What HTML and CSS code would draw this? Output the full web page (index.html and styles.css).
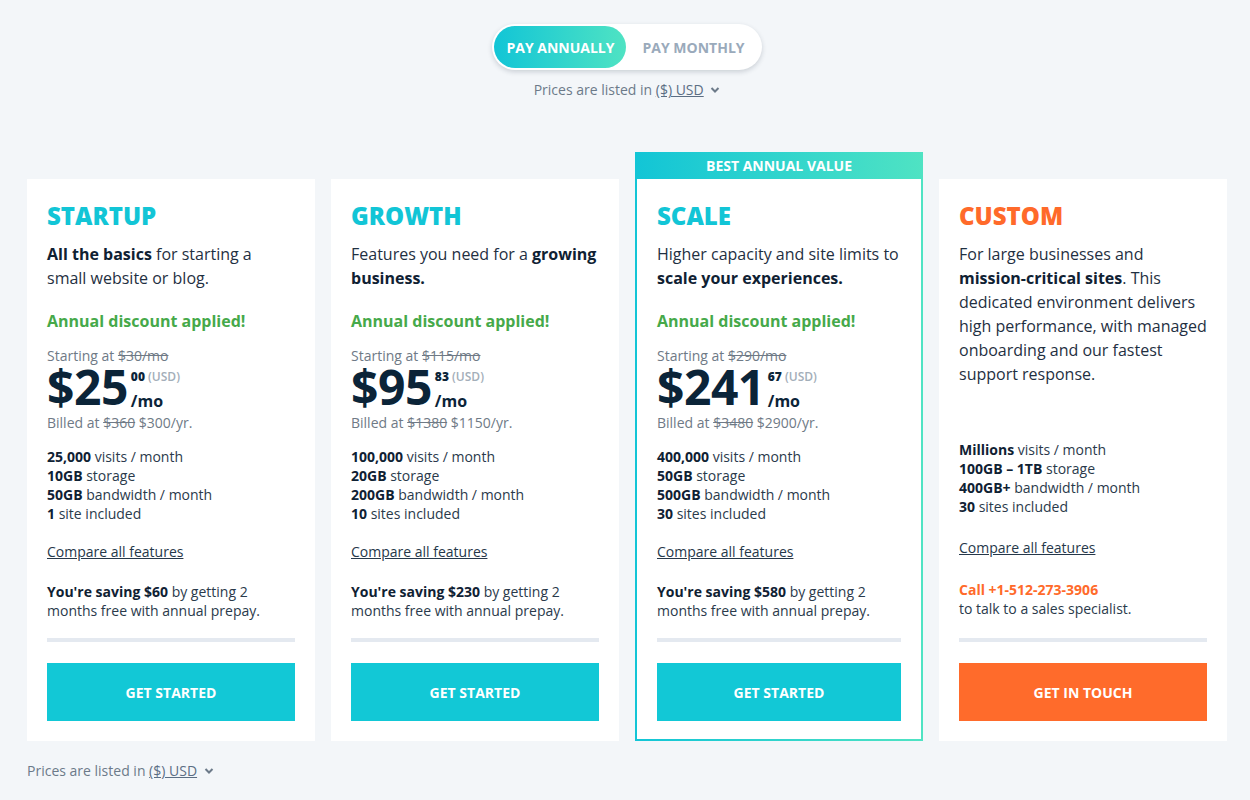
FILE: index.html
```html
<!DOCTYPE html>
<html lang="en">
<head>
  <meta charset="UTF-8" />
  <meta name="viewport" content="width=device-width, initial-scale=1.0"/>
  <title>Pricing Plans</title>
  <link rel="stylesheet" href="styles.css">
</head>
<body>
  <div class="page">
    <div class="billing">
      <div class="toggle">
        <button class="toggle-btn active">PAY ANNUALLY</button>
        <button class="toggle-btn">PAY MONTHLY</button>
      </div>
      <p class="currency">Prices are listed in <a href="#">($) USD</a>
        <svg class="chev" width="10" height="8" viewBox="0 0 10 8"><path d="M1.5 2l3.5 3.5L8.5 2" fill="none" stroke="#6c7a89" stroke-width="2"/></svg>
      </p>
    </div>

    <div class="plans">
      <div class="plan">
        <h2 class="plan-name">STARTUP</h2>
        <p class="plan-desc"><b>All the basics</b> for starting a small website or blog.</p>
        <p class="discount">Annual discount applied!</p>
        <p class="starting">Starting at <s>$30/mo</s></p>
        <div class="price">
          <span class="amount">$25</span>
          <span class="price-side">
            <span class="cents"><b>00</b> (USD)</span>
            <span class="per">/mo</span>
          </span>
        </div>
        <p class="billed">Billed at <s>$360</s> $300/yr.</p>
        <ul class="features">
          <li><b>25,000</b> visits / month</li>
          <li><b>10GB</b> storage</li>
          <li><b>50GB</b> bandwidth / month</li>
          <li><b>1</b> site included</li>
        </ul>
        <a class="compare" href="#">Compare all features</a>
        <p class="saving"><b>You're saving $60</b> by getting 2 months free with annual prepay.</p>
        <div class="divider"></div>
        <button class="cta">GET STARTED</button>
      </div>

      <div class="plan">
        <h2 class="plan-name">GROWTH</h2>
        <p class="plan-desc">Features you need for a <b>growing business.</b></p>
        <p class="discount">Annual discount applied!</p>
        <p class="starting">Starting at <s>$115/mo</s></p>
        <div class="price">
          <span class="amount">$95</span>
          <span class="price-side">
            <span class="cents"><b>83</b> (USD)</span>
            <span class="per">/mo</span>
          </span>
        </div>
        <p class="billed">Billed at <s>$1380</s> $1150/yr.</p>
        <ul class="features">
          <li><b>100,000</b> visits / month</li>
          <li><b>20GB</b> storage</li>
          <li><b>200GB</b> bandwidth / month</li>
          <li><b>10</b> sites included</li>
        </ul>
        <a class="compare" href="#">Compare all features</a>
        <p class="saving"><b>You're saving $230</b> by getting 2 months free with annual prepay.</p>
        <div class="divider"></div>
        <button class="cta">GET STARTED</button>
      </div>

      <div class="plan featured">
        <div class="badge">BEST ANNUAL VALUE</div>
        <h2 class="plan-name">SCALE</h2>
        <p class="plan-desc">Higher capacity and site limits to <b>scale your experiences.</b></p>
        <p class="discount">Annual discount applied!</p>
        <p class="starting">Starting at <s>$290/mo</s></p>
        <div class="price">
          <span class="amount">$241</span>
          <span class="price-side">
            <span class="cents"><b>67</b> (USD)</span>
            <span class="per">/mo</span>
          </span>
        </div>
        <p class="billed">Billed at <s>$3480</s> $2900/yr.</p>
        <ul class="features">
          <li><b>400,000</b> visits / month</li>
          <li><b>50GB</b> storage</li>
          <li><b>500GB</b> bandwidth / month</li>
          <li><b>30</b> sites included</li>
        </ul>
        <a class="compare" href="#">Compare all features</a>
        <p class="saving"><b>You're saving $580</b> by getting 2 months free with annual prepay.</p>
        <div class="divider"></div>
        <button class="cta">GET STARTED</button>
      </div>

      <div class="plan custom">
        <h2 class="plan-name">CUSTOM</h2>
        <p class="plan-desc">For large businesses and <b>mission-critical sites</b>. This dedicated environment delivers high performance, with managed onboarding and our fastest support response.</p>
        <ul class="features">
          <li><b>Millions</b> visits / month</li>
          <li><b>100GB – 1TB</b> storage</li>
          <li><b>400GB+</b> bandwidth / month</li>
          <li><b>30</b> sites included</li>
        </ul>
        <a class="compare" href="#">Compare all features</a>
        <p class="saving"><b class="call">Call +1-512-273-3906</b><br>to talk to a sales specialist.</p>
        <div class="divider"></div>
        <button class="cta orange">GET IN TOUCH</button>
      </div>
    </div>

    <p class="currency bottom">Prices are listed in <a href="#">($) USD</a>
      <svg class="chev" width="10" height="8" viewBox="0 0 10 8"><path d="M1.5 2l3.5 3.5L8.5 2" fill="none" stroke="#6c7a89" stroke-width="2"/></svg>
    </p>
  </div>
</body>
</html>
```

FILE: styles.css
```css
body {
  margin: 0;
  background: #f3f6f9;
  font-family: "Open Sans", Arial, sans-serif;
  color: #1b2b3c;
}

p, h2, ul {
  margin: 0;
}

.page {
  padding: 24px 23px 0 27px;
}

.billing {
  display: flex;
  flex-direction: column;
  align-items: center;
}

.toggle {
  display: flex;
  padding: 2px;
  height: 42px;
  background: #fff;
  border-radius: 24px;
  box-shadow: 0 2px 5px rgba(20, 40, 60, 0.18);
}

.toggle-btn {
  border: none;
  background: none;
  font-family: inherit;
  font-size: 14px;
  font-weight: 700;
  color: #9aaabb;
  padding: 0 15px 0 17px;
  border-radius: 21px;
  cursor: pointer;
}

.toggle-btn.active {
  color: #fff;
  padding: 0 11px 0 12px;
  background: linear-gradient(90deg, #12c5d6, #4fe3c3);
}

.currency {
  margin-top: 10px;
  font-size: 14px;
  line-height: 20px;
  color: #6c7a89;
}

.currency a {
  color: #5b6e84;
}

.chev {
  margin-left: 3px;
  vertical-align: 1px;
}

.currency.bottom {
  margin-top: 20px;
}

.plans {
  display: flex;
  gap: 16px;
  margin-top: 79px;
}

.plan {
  position: relative;
  box-sizing: border-box;
  width: 288px;
  background: #fff;
  padding: 20px;
  display: flex;
  flex-direction: column;
  align-items: flex-start;
}

.plan.featured {
  border: 2px solid;
  border-top: 0;
  border-image: linear-gradient(90deg, #12c5d6, #4fe3c3) 1;
  padding: 20px 20px 18px;
}

.badge {
  position: absolute;
  top: -27px;
  left: -2px;
  right: -2px;
  height: 27px;
  line-height: 27px;
  text-align: center;
  color: #fff;
  font-size: 14px;
  font-weight: 700;
  background: linear-gradient(90deg, #12c5d6, #4fe3c3);
}

.plan-name {
  font-size: 24px;
  line-height: 34px;
  font-weight: 800;
  color: #12c5d6;
}

.custom .plan-name {
  color: #ff6a2a;
}

.plan-desc {
  margin-top: 9px;
  font-size: 16px;
  line-height: 24px;
  color: #1f3042;
}

.plan-desc b {
  color: #0f2133;
}

.discount {
  margin-top: 19px;
  font-size: 16px;
  line-height: 24px;
  font-weight: 700;
  color: #46a94a;
}

.starting, .billed {
  font-size: 14px;
  line-height: 20px;
  color: #6f7a86;
}

.starting {
  margin-top: 13px;
}

.price {
  display: flex;
  color: #0b2438;
}

.amount {
  font-size: 48px;
  line-height: 41px;
  font-weight: 700;
  letter-spacing: -0.5px;
}

.price-side {
  display: flex;
  flex-direction: column;
  margin-left: 3px;
  padding-top: 4px;
}

.cents {
  font-size: 12px;
  line-height: 14px;
  font-weight: 600;
  color: #a3aeb9;
}

.cents b {
  color: #0b2438;
}

.per {
  margin-top: 7px;
  font-size: 16px;
  line-height: 20px;
  font-weight: 700;
}

.billed {
  margin-top: 2px;
}

.features {
  list-style: none;
  padding: 0;
  margin-top: 14px;
  font-size: 14px;
  line-height: 19px;
  color: #2a3a4b;
}

.features b, .saving b {
  color: #0f2133;
}

.custom .features {
  margin-top: 54px;
}

.compare {
  margin-top: 19px;
  font-size: 14px;
  line-height: 20px;
  color: #26384a;
}

.custom .compare {
  margin-top: 22px;
}

.saving {
  margin-top: 20px;
  margin-bottom: 18px;
  font-size: 14px;
  line-height: 19px;
  color: #2a3a4b;
}

.custom .saving {
  margin-top: 22px;
}

.saving b.call {
  color: #ff6a2a;
}

.divider {
  margin-top: auto;
  align-self: stretch;
  height: 4px;
  background: #e4e9f0;
}

.cta {
  align-self: stretch;
  margin-top: 21px;
  height: 58px;
  border: none;
  background: #12c8d6;
  color: #fff;
  font-family: inherit;
  font-size: 14px;
  font-weight: 700;
  cursor: pointer;
}

.cta.orange {
  background: #ff6b2b;
}
```
